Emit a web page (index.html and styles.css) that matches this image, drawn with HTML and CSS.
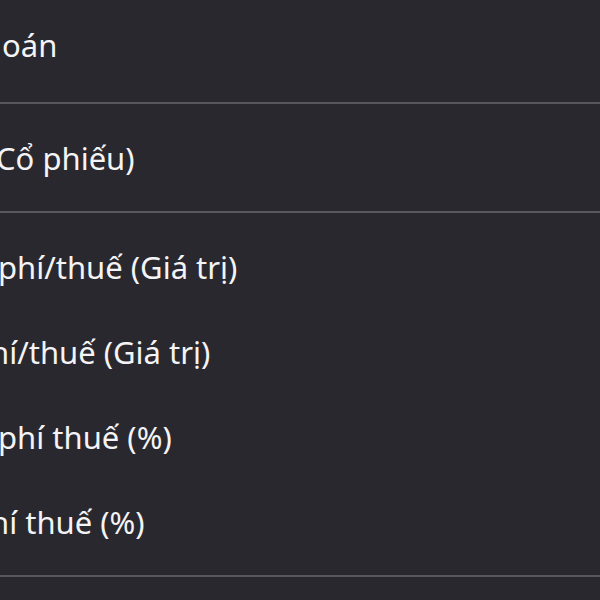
FILE: index.html
```html
<!DOCTYPE html>
<html lang="vi">
<head>
  <meta charset="UTF-8">
  <meta name="viewport" content="width=device-width, initial-scale=1.0">
  <title>Cài đặt cột</title>
  <link rel="stylesheet" href="styles.css">
</head>
<body>

  <div class="settings">
    <div class="group group-first">
      <div class="row"><span class="label cut-o">oán</span></div>
    </div>

    <div class="group">
      <div class="row"><span class="label cut-c">Cổ phiếu)</span></div>
    </div>

    <div class="group">
      <div class="row"><span class="label cut-p">phí/thuế (Giá trị)</span></div>
      <div class="row"><span class="label cut-h">hí/thuế (Giá trị)</span></div>
      <div class="row"><span class="label cut-p">phí thuế (%)</span></div>
      <div class="row"><span class="label cut-h">hí thuế (%)</span></div>
    </div>

    <div class="group group-last"></div>
  </div>

</body>
</html>
```

FILE: styles.css
```css
/* General Styles */
* {
  margin: 0;
  padding: 0;
  box-sizing: border-box;
}

body {
  background-color: #29282e;
  font-family: "Noto Sans", "Open Sans", sans-serif;
  color: #f4f4f6;
  height: 100vh;
  overflow: hidden;
}

.settings {
  width: 100%;
  overflow: hidden;
}

.group {
  padding: 11px 0;
  border-bottom: 2px solid #58575d;
}

.group-first {
  padding: 2px 0 15px;
}

.group-last {
  border-bottom: none;
}

.row {
  height: 85px;
  display: flex;
  align-items: center;
  white-space: nowrap;
}

.label {
  font-size: 31px;
}

/* labels start left of the visible area */
.cut-o {
  margin-left: 2px;
}

.cut-c {
  margin-left: -4px;
}

.cut-p {
  margin-left: -2px;
}

.cut-h {
  margin-left: -10px;
}
```
